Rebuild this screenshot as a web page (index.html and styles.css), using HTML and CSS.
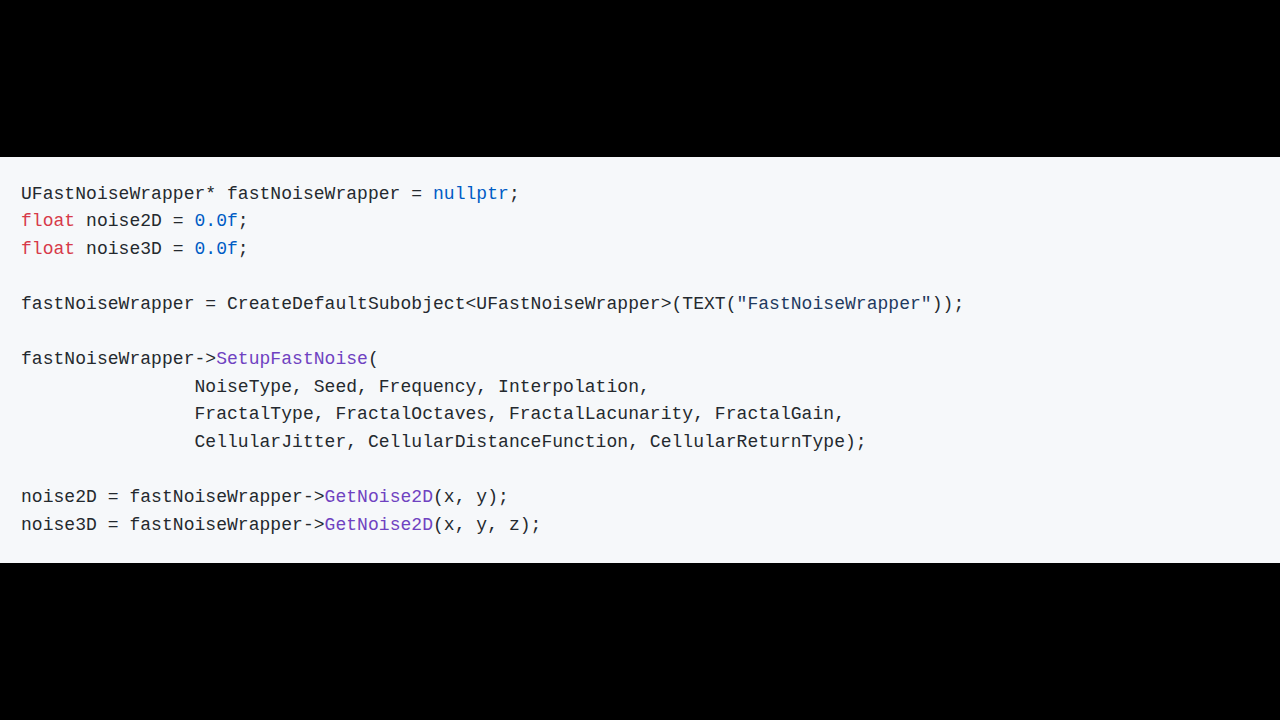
FILE: index.html
```html
<!DOCTYPE html>
<html>
<head>
<meta charset="utf-8">
<link rel="stylesheet" href="styles.css">
</head>
<body>
<div class="stage">
<pre class="code"><code class="src">UFastNoiseWrapper* fastNoiseWrapper = <span class="c">nullptr</span>;
<span class="k">float</span> noise2D = <span class="c">0.0f</span>;
<span class="k">float</span> noise3D = <span class="c">0.0f</span>;

fastNoiseWrapper = CreateDefaultSubobject&lt;UFastNoiseWrapper&gt;(TEXT(<span class="s">"FastNoiseWrapper"</span>));

fastNoiseWrapper-&gt;<span class="f">SetupFastNoise</span>(
                NoiseType, Seed, Frequency, Interpolation,
                FractalType, FractalOctaves, FractalLacunarity, FractalGain,
                CellularJitter, CellularDistanceFunction, CellularReturnType);

noise2D = fastNoiseWrapper-&gt;<span class="f">GetNoise2D</span>(x, y);
noise3D = fastNoiseWrapper-&gt;<span class="f">GetNoise2D</span>(x, y, z);</code></pre>
</div>
</body>
</html>
```
FILE: styles.css
```css
html, body {
  margin: 0;
  padding: 0;
  background: #000;
}
.stage {
  height: 720px;
  display: flex;
  flex-direction: column;
  justify-content: center;
}
.code {
  margin: 0;
  background: #f6f8fa;
  color: #24292e;
  font-family: "Liberation Mono", "DejaVu Sans Mono", monospace;
  font-size: 18px;
  letter-spacing: 0.04px;
  line-height: 27.58px;
  padding: 24px 21px;
  white-space: pre;
}
.src {
  display: block;
  font: inherit;
  line-height: inherit;
}
.k { color: #d73a49; }
.c { color: #005cc5; }
.f { color: #6f42c1; }
.s { color: #1f3a5f; }
```
